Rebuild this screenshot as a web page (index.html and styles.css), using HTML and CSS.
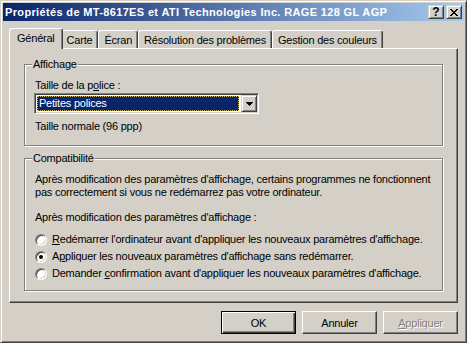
FILE: index.html
```html
<!doctype html>
<html lang="fr">
<head>
    <meta charset="UTF-8">
    <title>Propriétés de l'affichage</title>
    <link rel="stylesheet" href="styles.css">
</head>
<body>
<div class="window">
    <div class="titlebar">
        <span class="title">Propriétés de MT-8617ES et ATI Technologies Inc. RAGE 128 GL AGP</span>
        <span class="caption-btns">
            <span class="cap-btn help">?</span>
            <span class="cap-btn">
                <svg width="8" height="7" viewBox="0 0 8 7" shape-rendering="crispEdges"><path d="M0 0h2v1H0z M6 0h2v1H6z M1 1h2v1H1z M5 1h2v1H5z M2 2h4v1H2z M3 3h2v1H3z M2 4h4v1H2z M1 5h2v1H1z M5 5h2v1H5z M0 6h2v1H0z M6 6h2v1H6z" fill="#000"/></svg>
            </span>
        </span>
    </div>

    <div class="tabs">
        <span class="tab active">Général</span>
        <span class="tab">Carte</span>
        <span class="tab">Écran</span>
        <span class="tab">Résolution des problèmes</span>
        <span class="tab">Gestion des couleurs</span>
    </div>

    <div class="panel">
        <fieldset class="group display">
            <legend>Affichage</legend>
            <div class="field-label">Taille de la p<u>o</u>lice :</div>
            <div class="combo">
                <div class="combo-value"><span class="combo-sel">Petites polices</span></div>
                <span class="combo-btn">
                    <svg width="7" height="4" viewBox="0 0 7 4" shape-rendering="crispEdges"><path d="M0 0h7v1H0z M1 1h5v1H1z M2 2h3v1H2z M3 3h1v1H3z" fill="#000"/></svg>
                </span>
            </div>
            <div class="note">Taille normale (96 ppp)</div>
        </fieldset>

        <fieldset class="group compat">
            <legend>Compatibilité</legend>
            <p>Après modification des paramètres d'affichage, certains programmes ne fonctionnent<br>pas correctement si vous ne redémarrez pas votre ordinateur.</p>
            <p class="question">Après modification des paramètres d'affichage :</p>
            <div class="radios">
                <label class="radio"><span class="circle"></span><span><u>R</u>edémarrer l'ordinateur avant d'appliquer les nouveaux paramètres d'affichage.</span></label>
                <label class="radio"><span class="circle checked"></span><span>A<u>p</u>pliquer les nouveaux paramètres d'affichage sans redémarrer.</span></label>
                <label class="radio"><span class="circle"></span><span>Demander <u>c</u>onfirmation avant d'appliquer les nouveaux paramètres d'affichage.</span></label>
            </div>
        </fieldset>
    </div>

    <div class="actions">
        <button class="btn default">OK</button>
        <button class="btn">Annuler</button>
        <button class="btn" disabled><u>A</u>ppliquer</button>
    </div>
</div>
</body>
</html>
```

FILE: styles.css
```css
* {
    box-sizing: border-box;
}

body {
    margin: 0;
    font-family: "Liberation Sans", Arial, sans-serif;
    font-size: 11px;
    letter-spacing: -0.22px;
    color: #000;
    background-color: #d4d0c8;
}

.window {
    width: 467px;
    height: 343px;
    padding: 2px;
    background-color: #d4d0c8;
    border: 1px solid;
    border-color: #d4d0c8 #404040 #404040 #d4d0c8;
    box-shadow: inset 1px 1px #fff, inset -1px -1px #808080;
}

/* barre de titre */
.titlebar {
    display: flex;
    align-items: center;
    justify-content: space-between;
    height: 18px;
    padding: 0 2px;
    line-height: 18px;
    color: #fff;
    font-weight: bold;
    letter-spacing: 0.35px;
    white-space: nowrap;
    background: linear-gradient(to right, #0a246a, #a6caf0);
}

.caption-btns {
    display: flex;
    gap: 2px;
}

.cap-btn {
    display: flex;
    align-items: center;
    justify-content: center;
    width: 16px;
    height: 14px;
    color: #000;
    background-color: #d4d0c8;
    border: 1px solid;
    border-color: #d4d0c8 #404040 #404040 #d4d0c8;
    box-shadow: inset 1px 1px #fff, inset -1px -1px #808080;
}

.cap-btn.help {
    font-size: 12px;
    line-height: 12px;
    letter-spacing: 0;
}

/* onglets */
.tabs {
    position: relative;
    z-index: 1;
    display: flex;
    align-items: flex-end;
    height: 20px;
    margin: 7px 6px 0;
    padding-left: 2px;
}

.tab {
    height: 18px;
    padding: 3px 5px 1px;
    line-height: 13px;
    white-space: nowrap;
    border: 1px solid;
    border-bottom: 0;
    border-color: #fff #404040 transparent #fff;
    border-radius: 3px 3px 0 0;
    box-shadow: inset -1px 0 #808080;
}

.tab.active {
    position: relative;
    z-index: 1;
    height: 21px;
    margin: 0 -2px -1px;
    padding: 3px 7px 4px;
    background-color: #d4d0c8;
}

.panel {
    margin: 0 6px;
    padding: 9px 14px 11px;
    border: 1px solid;
    border-color: #fff #404040 #404040 #fff;
    box-shadow: inset -1px -1px #808080;
}

/* cadres */
.group {
    margin: 0;
    min-width: 0;
    padding: 8px 10px 12px;
    border: 1px solid #808080;
    box-shadow: inset 1px 1px #fff, 1px 1px #fff;
}

.group legend {
    margin-left: -3px;
    padding: 0 1px;
    line-height: 13px;
    background-color: #d4d0c8;
}

.field-label, .note, .group p {
    line-height: 13px;
}

.combo {
    display: flex;
    width: 225px;
    height: 21px;
    margin: 1px 0 0 -1px;
    padding: 1px;
    background-color: #fff;
    border: 1px solid;
    border-color: #808080 #fff #fff #808080;
    box-shadow: inset 1px 1px #404040, inset -1px -1px #d4d0c8;
}

.combo-value {
    flex: 1;
    display: flex;
    padding: 1px 2px 1px 1px;
}

.combo-sel {
    flex: 1;
    padding-left: 2px;
    line-height: 15px;
    color: #fff;
    background-color: #0a246a;
    outline: 1px dotted #c9b76a;
    outline-offset: -1px;
}

.combo-btn {
    display: flex;
    align-items: center;
    justify-content: center;
    width: 16px;
    height: 17px;
    background-color: #d4d0c8;
    border: 1px solid;
    border-color: #d4d0c8 #404040 #404040 #d4d0c8;
    box-shadow: inset 1px 1px #fff, inset -1px -1px #808080;
}

.note {
    margin-top: 6px;
}

.compat {
    margin-top: 6px;
    padding-bottom: 8px;
}

.group p {
    margin: 0;
}

.group p.question {
    margin-top: 12px;
}

.radios {
    margin-top: 7px;
}

.radio {
    display: flex;
    align-items: center;
    height: 17px;
    line-height: 17px;
    white-space: nowrap;
}

.circle {
    position: relative;
    width: 12px;
    height: 12px;
    margin-right: 5px;
    flex: none;
    background-color: #fff;
    border: 1px solid;
    border-color: #808080 #fff #fff #808080;
    border-radius: 50%;
    box-shadow: inset 1px 1px #404040, inset -1px -1px #d4d0c8;
}

.circle.checked::after {
    content: "";
    position: absolute;
    left: 3px;
    top: 3px;
    width: 4px;
    height: 4px;
    border-radius: 50%;
    background-color: #000;
}

/* boutons */
.actions {
    display: flex;
    justify-content: flex-end;
    gap: 6px;
    margin: 8px 6px 0 0;
}

.btn {
    width: 75px;
    height: 23px;
    padding: 0;
    font: inherit;
    letter-spacing: inherit;
    color: #000;
    background-color: #d4d0c8;
    border: 1px solid;
    border-color: #fff #404040 #404040 #fff;
    border-radius: 0;
    box-shadow: inset -1px -1px #808080;
}

.btn.default {
    border-color: #000;
    box-shadow: inset 1px 1px #fff, inset -1px -1px #404040, inset -2px -2px #808080;
}

.btn:disabled {
    color: #808080;
    text-shadow: 1px 1px #fff;
}
```
